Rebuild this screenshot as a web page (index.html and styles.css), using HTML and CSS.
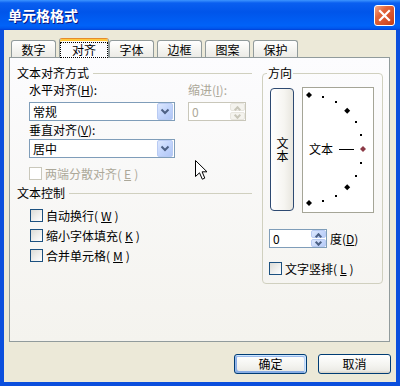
FILE: index.html
```html
<!DOCTYPE html>
<html lang="zh-CN">

<head>
   <meta charset="UTF-8">
   <title>单元格格式</title>
   <link rel="stylesheet" href="styles.css">
</head>

<body>
   <div class="window">
      <div class="titlebar">
         <span class="title">单元格格式</span>
         <span class="close">
            <svg width="19" height="19" viewBox="0 0 19 19">
               <path d="M5 5 L14 14 M14 5 L5 14" stroke="#fff" stroke-width="2.2" stroke-linecap="square" />
            </svg>
         </span>
      </div>

      <div class="client">
         <div class="tabs">
            <div class="tab">数字</div>
            <div class="tab active"><span class="focus">对齐</span></div>
            <div class="tab">字体</div>
            <div class="tab">边框</div>
            <div class="tab">图案</div>
            <div class="tab">保护</div>
         </div>

         <div class="page">
            <div class="left">
               <div class="legend"><span>文本对齐方式</span></div>
               <div class="align-grid">
                  <div>水平对齐(<u>H</u>):</div>
                  <div class="disabled">缩进(<u>I</u>):</div>
                  <div class="combo"><span>常规</span><span class="drop"><svg width="14" height="15" viewBox="0 0 14 15"><path d="M3.5 5.5 L7 9 L10.5 5.5" fill="none" stroke="#4d6185" stroke-width="2" /></svg></span></div>
                  <div class="spin off"><span>0</span><span class="spin-btns"><i class="up"></i><i class="down"></i></span></div>
                  <div>垂直对齐(<u>V</u>):</div>
                  <div></div>
                  <div class="combo"><span>居中</span><span class="drop"><svg width="14" height="15" viewBox="0 0 14 15"><path d="M3.5 5.5 L7 9 L10.5 5.5" fill="none" stroke="#4d6185" stroke-width="2" /></svg></span></div>
               </div>
               <div class="check off justify"><span class="box"></span>两端分散对齐(<u>E</u>)</div>

               <div class="legend second"><span>文本控制</span></div>
               <div class="checks">
                  <div class="check"><span class="box"></span>自动换行(<u>W</u>)</div>
                  <div class="check"><span class="box"></span>缩小字体填充(<u>K</u>)</div>
                  <div class="check"><span class="box"></span>合并单元格(<u>M</u>)</div>
               </div>
            </div>

            <div class="orient">
               <div class="orient-title">方向</div>
               <div class="dial-row">
                  <div class="vbutton"><span class="vtext">文本</span></div>
                  <div class="dial">
                     <svg width="70" height="124" viewBox="0 0 70 124">
                        <g fill="#000">
                           <polygon points="6,4 9,7 6,10 3,7" />
                           <polygon points="44.2,19.8 47.2,22.8 44.2,25.8 41.2,22.8" />
                           <polygon points="44.2,96.2 47.2,99.2 44.2,102.2 41.2,99.2" />
                           <polygon points="6,112 9,115 6,118 3,115" />
                           <rect x="19" y="8" width="2" height="2" />
                           <rect x="32" y="13" width="2" height="2" />
                           <rect x="52" y="33" width="2" height="2" />
                           <rect x="57" y="46" width="2" height="2" />
                           <rect x="57" y="74" width="2" height="2" />
                           <rect x="52" y="87" width="2" height="2" />
                           <rect x="32" y="107" width="2" height="2" />
                           <rect x="19" y="112" width="2" height="2" />
                        </g>
                        <polygon points="60,58 63,61 60,64 57,61" fill="#8c3a46" />
                        <text x="6" y="65.5" font-size="12" font-family="Noto Sans CJK SC, sans-serif">文本</text>
                        <line x1="36" y1="61.5" x2="51" y2="61.5" stroke="#000" stroke-width="1" />
                     </svg>
                  </div>
               </div>
               <div class="degree">
                  <div class="spin"><span>0</span><span class="spin-btns"><i class="up"></i><i class="down"></i></span></div>
                  <span>度(<u>D</u>)</span>
               </div>
               <div class="check vertical"><span class="box"></span>文字竖排(<u>L</u>)</div>
            </div>
         </div>

         <div class="actions">
            <div class="btn default">确定</div>
            <div class="btn">取消</div>
         </div>
      </div>

      <svg class="cursor" width="13" height="21" viewBox="0 0 13 21">
         <path d="M0.5 0.5 L0.5 16.5 L4.5 12.8 L7.3 19.2 L9.8 18.1 L7.1 11.8 L12 11.8 Z" fill="#fff" stroke="#000" stroke-width="1" stroke-linejoin="miter" />
      </svg>
   </div>
</body>

</html>
```

FILE: styles.css
```css
* {
   box-sizing: border-box;
}

body {
   margin: 0;
   font-family: "Noto Sans CJK SC", "Noto Sans", sans-serif;
   font-size: 12px;
   line-height: 12px;
   color: #000;
}

u {
   text-decoration-thickness: 1px;
   text-underline-offset: 1px;
}

.window {
   position: relative;
   width: 400px;
   height: 386px;
   display: flex;
   flex-direction: column;
   background: #0b4fdd;
   overflow: hidden;
}

.titlebar {
   flex: none;
   height: 30px;
   display: flex;
   justify-content: space-between;
   padding: 0 5px 0 8px;
   background: linear-gradient(#3d95ff, #0a5ff0 10%, #0055ea 40%, #0062f8 85%, #0058ee 94%, #0040d8);
}

.title {
   align-self: center;
   color: #fff;
   font-size: 14px;
   line-height: 14px;
   font-weight: bold;
   text-shadow: 1px 1px #0a1883;
}

.close {
   width: 21px;
   height: 21px;
   margin-top: 5px;
   border: 1px solid #fff;
   border-radius: 3px;
   background: linear-gradient(135deg, #f3a98a, #e2643a 35%, #d5502a 70%, #c03c14);
}

.close svg {
   display: block;
}

.client {
   flex: 1;
   margin: 0 4px 4px;
   padding: 8px 0 0 5px;
   background: #ece9d8;
   display: flex;
   flex-direction: column;
}

.tabs {
   position: relative;
   z-index: 1;
   display: flex;
   gap: 3px;
   height: 20px;
   padding-left: 2px;
   margin-bottom: -1px;
}

.tab {
   width: 45px;
   height: 17px;
   margin-top: 2px;
   border: 1px solid #919b9c;
   border-bottom: none;
   border-radius: 3px 3px 0 0;
   background: linear-gradient(#fff, #f3f3ef 60%, #ecebe6);
   display: flex;
   align-items: center;
   justify-content: center;
   padding-top: 1px;
}

.tab.active {
   width: 50px;
   height: 20px;
   margin: 0 -3px 0 0;
   border-top-color: #e68b2c;
   box-shadow: inset 0 2px #ffc83c;
   background: #fcfcfe;
   align-items: flex-start;
   padding-top: 4px;
}

.focus {
   display: block;
   width: 46px;
   height: 14px;
   line-height: 13px;
   text-align: center;
   outline: 1px dotted #000;
}

.page {
   width: 381px;
   height: 285px;
   border: 1px solid #919b9c;
   background: linear-gradient(#fcfcfe, #f4f3ee);
   display: flex;
   gap: 10px;
   padding: 9px 0 0 7px;
}

.left {
   width: 235px;
   flex: none;
}

.legend {
   display: flex;
   align-items: center;
   gap: 4px;
   height: 12px;
}

.legend::after {
   content: "";
   flex: 1;
   height: 1px;
   background: #d0d0bf;
}

.legend.second {
   margin-top: 7px;
}

.align-grid {
   display: grid;
   grid-template-columns: 146px 58px;
   grid-template-rows: 18px 22px 15px 19px;
   column-gap: 13px;
   align-items: start;
   margin: 5px 0 0 12px;
}

.disabled,
.off {
   color: #aca899;
}

.combo {
   height: 19px;
   border: 1px solid #7f9db9;
   background: #fff;
   display: flex;
   align-items: center;
   justify-content: space-between;
   padding-left: 3px;
}

.drop {
   width: 16px;
   height: 17px;
   margin-right: 1px;
   border: 1px solid #b9cbf3;
   border-radius: 2px;
   background: linear-gradient(135deg, #dde8fe, #c3d5fc 50%, #b0c6f5);
   display: flex;
   align-items: center;
   justify-content: center;
}

.drop svg {
   display: block;
}

.spin {
   width: 58px;
   height: 19px;
   border: 1px solid #7f9db9;
   background: #fff;
   display: flex;
   align-items: center;
   justify-content: space-between;
   padding-left: 3px;
}

.spin-btns {
   width: 15px;
   height: 17px;
   display: flex;
   flex-direction: column;
   gap: 1px;
}

.spin-btns i {
   flex: 1;
   border: 1px solid #b9cbf3;
   border-radius: 2px;
   background: linear-gradient(135deg, #dde8fe, #b6cbf8);
   position: relative;
}

.spin-btns i::after {
   content: "";
   position: absolute;
   left: 4px;
   width: 3px;
   height: 3px;
   border: solid #4d6185;
   border-width: 2px 0 0 2px;
}

.spin-btns .up::after {
   top: 3px;
   transform: rotate(45deg);
}

.spin-btns .down::after {
   top: 0;
   transform: rotate(225deg);
}

.spin.off {
   border-color: #c9c7ba;
}

.spin.off .spin-btns i {
   border-color: #e8e6df;
   background: #f4f3ee;
}

.spin.off .spin-btns i::after {
   border-color: #c9c7ba;
}

.check {
   display: flex;
   align-items: center;
   gap: 3px;
   height: 13px;
}

.box {
   width: 13px;
   height: 13px;
   flex: none;
   border: 1px solid #1c5180;
   background: linear-gradient(135deg, #dcdcd7, #fff);
}

.check.off .box {
   border-color: #cac8bb;
   background: #fff;
}

.justify {
   margin: 9px 0 0 12px;
}

.checks {
   display: flex;
   flex-direction: column;
   gap: 7px;
   margin: 10px 0 0 13px;
}

.orient {
   width: 121px;
   height: 211px;
   flex: none;
   margin-top: 6px;
   border: 1px solid #d0d0bf;
   border-radius: 4px;
   padding: 0 7px;
}

.orient-title {
   width: fit-content;
   margin: -7px 0 0 -3px;
   padding: 0 1px;
   background: #fbfbfb;
}

.dial-row {
   display: flex;
   align-items: flex-start;
   gap: 8px;
   margin-top: 9px;
}

.vbutton {
   width: 24px;
   height: 123px;
   border: 1px solid #2e4a72;
   border-radius: 4px;
   background: linear-gradient(90deg, #fff, #f6f5f1 60%, #e8e6df);
   display: flex;
   align-items: center;
   justify-content: center;
}

.vtext {
   writing-mode: vertical-rl;
   text-orientation: upright;
   letter-spacing: 1px;
   line-height: 12px;
}

.dial {
   width: 72px;
   height: 126px;
   margin-top: -1px;
   border: 1px solid #a5a597;
   background: #fff;
}

.dial svg {
   display: block;
}

.degree {
   display: flex;
   align-items: center;
   gap: 3px;
   margin: 16px 0 0 -1px;
}

.vertical {
   margin: 14px 0 0 -1px;
}

.actions {
   display: flex;
   justify-content: flex-end;
   gap: 11px;
   margin-top: 12px;
   padding-right: 5px;
}

.btn {
   width: 73px;
   height: 20px;
   border: 1px solid #003c74;
   border-radius: 3px;
   background: linear-gradient(#fff, #f3f3ef 60%, #ecebe6 86%, #d6d0c5);
   display: flex;
   align-items: center;
   justify-content: center;
}

.btn.default {
   box-shadow: inset -1px 1px #cee7ff, inset 1px 2px #98b8ea, inset -2px 2px #bcd4f6, inset 1px -1px #89ade4, inset 2px -2px #89ade4;
}

.cursor {
   position: absolute;
   left: 195px;
   top: 160px;
}
```
